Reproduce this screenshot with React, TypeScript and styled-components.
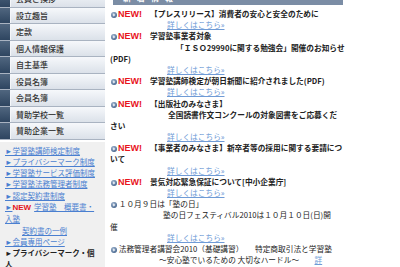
import React from "react";
import styled, { createGlobalStyle } from "styled-components";

const GlobalStyle = createGlobalStyle`
  html, body {
    margin: 0;
    padding: 0;
    background: #fff;
  }
  body {
    font-family: "Noto Sans CJK JP", "Liberation Sans", sans-serif;
    overflow: hidden;
  }
`;

const Page = styled.div`
  display: flex;
  width: 400px;
  height: 267px;
  overflow: hidden;
`;

const Side = styled.div`
  width: 105px;
  flex: none;
  margin-top: -9px;
`;

const Menu = styled.ul`
  list-style: none;
  margin: 0;
  padding: 0;
`;

const MenuItem = styled.li`
  display: flex;
  height: 16.5px;
  box-sizing: border-box;
  border-bottom: 1px solid #a9b3c1;
`;

const MenuMark = styled.span`
  width: 10px;
  flex: none;
  background: linear-gradient(#50667f, #2e4560);
  border-right: 1px solid #f4f6f9;
`;

const MenuLabel = styled.span`
  flex: 1;
  padding-left: 5px;
  background: linear-gradient(#f6f8fb, #dbe1e9);
  font-size: 8px;
  line-height: 15.5px;
  color: #333;
  font-weight: 500;
`;

const LinkBox = styled.div`
  margin-top: 2px;
  padding: 3px 0 0 5px;
  background: #f0f0f0;
  font-size: 7.5px;
  line-height: 11.3px;
  height: 200px;
`;

const SideLine = styled.div<{ $indent?: number; $plain?: boolean }>`
  white-space: nowrap;
  padding-left: ${(p) => p.$indent ?? 0}px;
  color: ${(p) => (p.$plain ? "#222" : "#4a7fd0")};
  text-decoration: ${(p) => (p.$plain ? "none" : "underline")};
  font-weight: ${(p) => (p.$plain ? 700 : 400)};
`;

const SideNew = styled.span`
  font-family: "Liberation Sans", sans-serif;
  font-weight: 700;
  color: #e3141b;
  font-size: 8px;
  text-decoration: none;
  display: inline-block;
  margin-right: 3px;
`;

const Main = styled.div`
  width: 233px;
  flex: none;
  margin-left: 5px;
  margin-top: -9px;
  font-size: 7.7px;
  line-height: 11.2px;
  color: #222;
`;

const Heading = styled.div`
  height: 14px;
  margin: 0 0 3px 3px;
  padding-left: 10px;
  background: #7b8da5;
  color: #fff;
  font-size: 8px;
  line-height: 14px;
  letter-spacing: 6px;
  font-weight: 700;
`;

const Line = styled.div<{ $indent?: number; $bold?: boolean }>`
  white-space: nowrap;
  height: 11.2px;
  padding-left: ${(p) => p.$indent ?? 0}px;
  font-weight: ${(p) => (p.$bold ? 700 : 400)};
`;

const NewMark = styled.span`
  font-family: "Liberation Sans", sans-serif;
  font-weight: 900;
  font-size: 9px;
  color: #e8141c;
  margin: 0 8px 0 1px;
`;

const More = styled.span`
  color: #6f9bd6;
  text-decoration: underline;
  font-weight: 400;
`;

const BulletSvg = styled.svg`
  display: inline-block;
  vertical-align: -1px;
  margin-left: 1px;
`;

const Bullet = () => (
  <BulletSvg width="6" height="6" viewBox="0 0 6 6">
    <defs>
      <radialGradient id="bg" cx="40%" cy="35%" r="70%">
        <stop offset="0" stopColor="#a9bdd6" />
        <stop offset="1" stopColor="#3f5f88" />
      </radialGradient>
    </defs>
    <circle cx="3" cy="3" r="3" fill="url(#bg)" />
    <path d="M2.3 1.6 L4.2 3 L2.3 4.4 Z" fill="#fff" />
  </BulletSvg>
);

const menu = [
  "会員ご挨拶",
  "設立趣旨",
  "定款",
  "個人情報保護",
  "自主基準",
  "役員名簿",
  "会員名簿",
  "賛助学校一覧",
  "賛助企業一覧",
];

const MoreLine = () => (
  <Line $indent={57}>
    <More>詳しくはこちら»</More>
  </Line>
);

export default function App() {
  return (
    <>
      <GlobalStyle />
      <Page>
        <Side>
          <Menu>
            {menu.map((m) => (
              <MenuItem key={m}>
                <MenuMark />
                <MenuLabel>{m}</MenuLabel>
              </MenuItem>
            ))}
          </Menu>
          <LinkBox>
            <SideLine>►学習塾講師検定制度</SideLine>
            <SideLine>►プライバシーマーク制度</SideLine>
            <SideLine>►学習塾サービス評価制度</SideLine>
            <SideLine>►学習塾法務管理者制度</SideLine>
            <SideLine>►認定契約書制度</SideLine>
            <SideLine>
              ►<SideNew>NEW</SideNew>学習塾　概要書・
            </SideLine>
            <SideLine>入塾</SideLine>
            <SideLine $indent={17}>契約書の一例</SideLine>
            <SideLine>►会員専用ページ</SideLine>
            <SideLine $plain>►プライバシーマーク・個</SideLine>
            <SideLine $plain>人</SideLine>
          </LinkBox>
        </Side>
        <Main>
          <Heading>新着情報</Heading>
          <Line $bold>
            <Bullet />
            <NewMark>NEW!</NewMark>【プレスリリース】消費者の安心と安全のために
          </Line>
          <MoreLine />
          <Line $bold>
            <Bullet />
            <NewMark>NEW!</NewMark>学習塾事業者対象
          </Line>
          <Line $bold $indent={66}>
            「ＩＳＯ29990に関する勉強会」開催のお知らせ
          </Line>
          <Line $bold>(PDF)</Line>
          <MoreLine />
          <Line $bold>
            <Bullet />
            <NewMark>NEW!</NewMark>学習塾講師検定が朝日新聞に紹介されました(PDF)
          </Line>
          <MoreLine />
          <Line $bold>
            <Bullet />
            <NewMark>NEW!</NewMark>【出版社のみなさま】
          </Line>
          <Line $bold $indent={58}>
            全国読書作文コンクールの対象図書をご応募くだ
          </Line>
          <Line $bold>さい</Line>
          <MoreLine />
          <Line $bold>
            <Bullet />
            <NewMark>NEW!</NewMark>【事業者のみなさま】新卒者等の採用に関する要請につ
          </Line>
          <Line $bold>いて</Line>
          <MoreLine />
          <Line $bold>
            <Bullet />
            <NewMark>NEW!</NewMark>景気対応緊急保証について[中小企業庁]
          </Line>
          <MoreLine />
          <Line>
            <Bullet /> １０月９日は「塾の日」
          </Line>
          <Line $indent={53}>塾の日フェスティバル2010は１０月１０日(日)開</Line>
          <Line>催</Line>
          <MoreLine />
          <Line>
            <Bullet /> 法務管理者講習会2010（基礎講習）　　特定商取引法と学習塾
          </Line>
          <Line $indent={49}>
            ～安心塾でいるための 大切なハードル～　　<More>詳</More>
          </Line>
        </Main>
      </Page>
    </>
  );
}
